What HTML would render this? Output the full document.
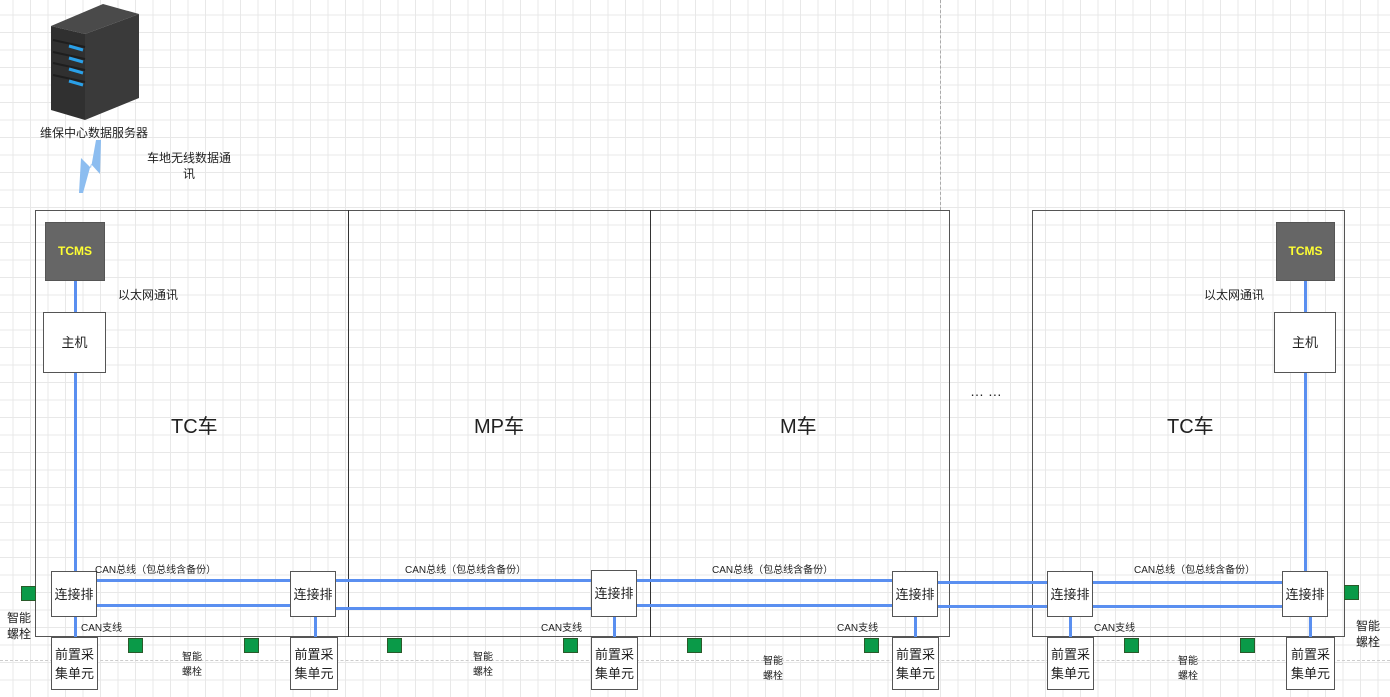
<!DOCTYPE html>
<html><head><meta charset="utf-8"><style>
body{margin:0;width:1390px;height:697px;overflow:hidden;background:#fff;
background-image:linear-gradient(#e8e8e8 1px,transparent 1px),linear-gradient(90deg,#e8e8e8 1px,transparent 1px);
background-size:17.5px 17.5px;background-position:-5px -3px;
font-family:"Liberation Sans","Noto Sans CJK SC",sans-serif;position:relative}
.a{position:absolute}
.b{position:absolute;background:#fff;border:1px solid #555;box-sizing:border-box;display:flex;align-items:center;justify-content:center;text-align:center;font-size:13px;color:#222;line-height:19px}
.g{position:absolute;width:15px;height:15px;background:#0a9a48;border:1px solid #2a5a2a;box-sizing:border-box}
.h{position:absolute;height:3px;background:#5a8ff0}
.v{position:absolute;width:3px;background:#5a8ff0}
.t{position:absolute;font-size:11px;color:#222;white-space:nowrap}
.big{position:absolute;font-size:20px;color:#222}
</style></head><body>
<div class="a" style="left:940px;top:0;height:210px;border-left:1px dashed #aaa"></div>
<div class="a" style="left:0;top:660px;width:1390px;border-top:1px dashed #ccc"></div>

<svg class="a" style="left:45px;top:0" width="100" height="125">
<polygon points="6,26 58,4 94,14 40,34" fill="#4a4a4a"/>
<polygon points="6,26 40,34 40,120 6,110" fill="#303030"/>
<polygon points="40,34 94,14 94,98 40,120" fill="#3a3a3a"/>
<g stroke="#1e1e1e" stroke-width="2"><line x1="8" y1="40" x2="40" y2="47"/><line x1="8" y1="52" x2="40" y2="59"/><line x1="8" y1="63" x2="40" y2="70"/><line x1="8" y1="75" x2="40" y2="82"/></g>
<g stroke="#2aa0e8" stroke-width="3"><line x1="24" y1="46" x2="38" y2="50"/><line x1="24" y1="58" x2="38" y2="62"/><line x1="24" y1="69" x2="38" y2="73"/><line x1="24" y1="81" x2="38" y2="85"/></g>
</svg>
<div class="t" style="left:40px;top:124px;font-size:12px">维保中心数据服务器</div>
<svg class="a" style="left:76px;top:140px" width="30" height="55"><polygon points="20,0 25,0 24,34 15,24 7,53 3,53 5,18 15,28" fill="#8cbdf0"/></svg>
<div class="t" style="left:147px;top:150px;font-size:12px;text-align:center;line-height:16px">车地无线数据通<br>讯</div>

<div class="a" style="left:35px;top:210px;width:915px;height:427px;border:1px solid #555;box-sizing:border-box"></div>
<div class="a" style="left:348px;top:210px;height:427px;border-left:1px solid #333"></div>
<div class="a" style="left:650px;top:210px;height:427px;border-left:1px solid #333"></div>
<div class="a" style="left:1032px;top:210px;width:313px;height:427px;border:1px solid #555;box-sizing:border-box"></div>

<div class="v" style="left:74px;top:281px;height:290px"></div>
<div class="v" style="left:1304px;top:281px;height:290px"></div>
<div class="b" style="left:45px;top:222px;width:60px;height:59px;background:#666;color:#ffff33;font-weight:bold;font-size:12px">TCMS</div>
<div class="b" style="left:1276px;top:222px;width:59px;height:59px;background:#666;color:#ffff33;font-weight:bold;font-size:12px">TCMS</div>
<div class="t" style="left:118px;top:286px;font-size:12px">以太网通讯</div>
<div class="t" style="left:1204px;top:286px;font-size:12px">以太网通讯</div>
<div class="b" style="left:43px;top:312px;width:63px;height:61px">主机</div>
<div class="b" style="left:1274px;top:312px;width:62px;height:61px">主机</div>

<div class="big" style="left:171px;top:410px">TC车</div>
<div class="big" style="left:474px;top:410px">MP车</div>
<div class="big" style="left:780px;top:410px">M车</div>
<div class="big" style="left:1167px;top:410px">TC车</div>
<div class="t" style="left:970px;top:383px;font-size:14px">… …</div>

<div class="h" style="left:97px;top:579px;width:193px"></div>
<div class="h" style="left:97px;top:604px;width:193px"></div>
<div class="h" style="left:336px;top:579px;width:255px"></div>
<div class="h" style="left:330px;top:607px;width:261px"></div>
<div class="h" style="left:637px;top:579px;width:255px"></div>
<div class="h" style="left:637px;top:604px;width:255px"></div>
<div class="h" style="left:938px;top:581px;width:109px"></div>
<div class="h" style="left:938px;top:605px;width:109px"></div>
<div class="h" style="left:1093px;top:581px;width:189px"></div>
<div class="h" style="left:1093px;top:605px;width:189px"></div>

<div class="v" style="left:74px;top:617px;height:20px"></div>
<div class="v" style="left:314px;top:617px;height:20px"></div>
<div class="v" style="left:613px;top:617px;height:20px"></div>
<div class="v" style="left:914px;top:617px;height:20px"></div>
<div class="v" style="left:1069px;top:617px;height:20px"></div>
<div class="v" style="left:1309px;top:617px;height:20px"></div>

<div class="b" style="left:51px;top:571px;width:46px;height:46px">连接排</div>
<div class="b" style="left:290px;top:571px;width:46px;height:46px">连接排</div>
<div class="b" style="left:591px;top:570px;width:46px;height:47px">连接排</div>
<div class="b" style="left:892px;top:571px;width:46px;height:46px">连接排</div>
<div class="b" style="left:1047px;top:571px;width:46px;height:46px">连接排</div>
<div class="b" style="left:1282px;top:571px;width:46px;height:46px">连接排</div>

<div class="b" style="left:51px;top:637px;width:47px;height:53px">前置采<br>集单元</div>
<div class="b" style="left:290px;top:637px;width:48px;height:53px">前置采<br>集单元</div>
<div class="b" style="left:591px;top:637px;width:47px;height:53px">前置采<br>集单元</div>
<div class="b" style="left:892px;top:637px;width:47px;height:53px">前置采<br>集单元</div>
<div class="b" style="left:1047px;top:637px;width:47px;height:53px">前置采<br>集单元</div>
<div class="b" style="left:1286px;top:637px;width:49px;height:53px">前置采<br>集单元</div>

<div class="t" style="left:95px;top:561px;font-size:10px">CAN总线（包总线含备份）</div>
<div class="t" style="left:405px;top:561px;font-size:10px">CAN总线（包总线含备份）</div>
<div class="t" style="left:712px;top:561px;font-size:10px">CAN总线（包总线含备份）</div>
<div class="t" style="left:1134px;top:561px;font-size:10px">CAN总线（包总线含备份）</div>
<div class="t" style="left:81px;top:619px;font-size:10px">CAN支线</div>
<div class="t" style="left:541px;top:619px;font-size:10px">CAN支线</div>
<div class="t" style="left:837px;top:619px;font-size:10px">CAN支线</div>
<div class="t" style="left:1094px;top:619px;font-size:10px">CAN支线</div>

<div class="g" style="left:21px;top:586px"></div>
<div class="g" style="left:128px;top:638px"></div>
<div class="g" style="left:244px;top:638px"></div>
<div class="g" style="left:387px;top:638px"></div>
<div class="g" style="left:563px;top:638px"></div>
<div class="g" style="left:687px;top:638px"></div>
<div class="g" style="left:864px;top:638px"></div>
<div class="g" style="left:1124px;top:638px"></div>
<div class="g" style="left:1240px;top:638px"></div>
<div class="g" style="left:1344px;top:585px"></div>

<div class="t" style="left:7px;top:610px;font-size:12px;line-height:16px">智能<br>螺栓</div>
<div class="t" style="left:1356px;top:618px;font-size:12px;line-height:16px">智能<br>螺栓</div>
<div class="t" style="left:182px;top:650px;font-size:10px;line-height:15px">智能<br>螺栓</div>
<div class="t" style="left:473px;top:650px;font-size:10px;line-height:15px">智能<br>螺栓</div>
<div class="t" style="left:763px;top:654px;font-size:10px;line-height:15px">智能<br>螺栓</div>
<div class="t" style="left:1178px;top:654px;font-size:10px;line-height:15px">智能<br>螺栓</div>
</body></html>
